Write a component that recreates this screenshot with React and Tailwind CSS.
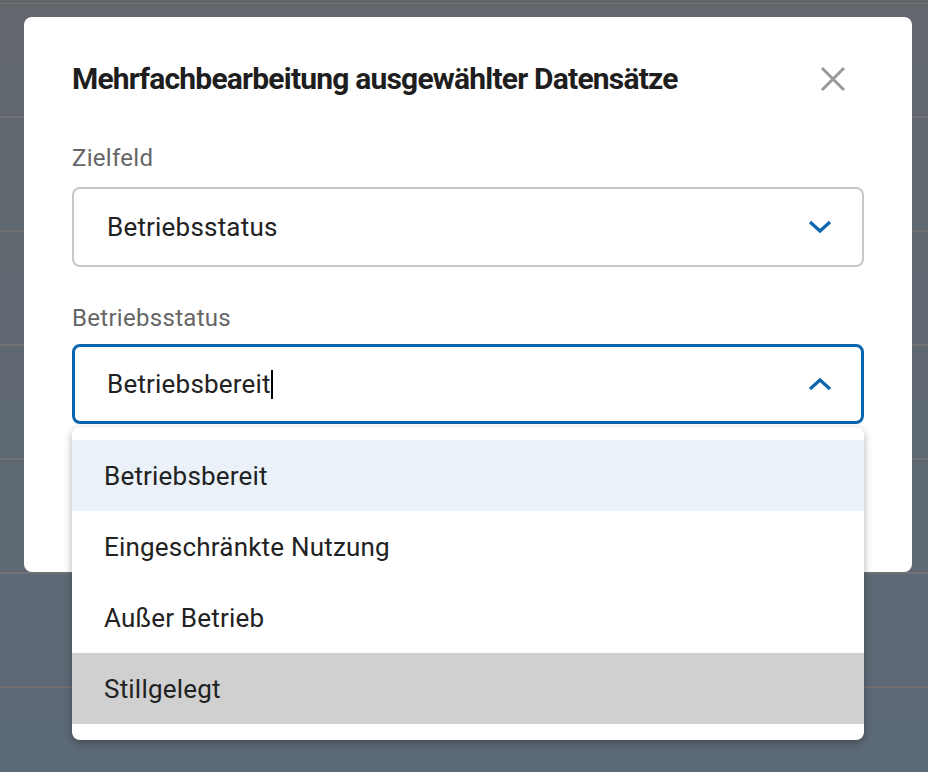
import React from "react";

const options = [
  { label: "Betriebsbereit", className: "bg-[#eaf1f8]" },
  { label: "Eingeschränkte Nutzung", className: "bg-white" },
  { label: "Außer Betrieb", className: "bg-white" },
  { label: "Stillgelegt", className: "bg-[#d0d0d0]" },
];

function Chevron({ up }) {
  return (
    <svg width="24" height="14" viewBox="0 0 24 14" className="shrink-0">
      <polyline
        points={up ? "2,12 12,3 22,12" : "2,2 12,11 22,2"}
        fill="none"
        stroke="#0f65ae"
        strokeWidth="3.2"
      />
    </svg>
  );
}

export default function App() {
  return (
    <div
      className="relative h-[772px] w-[928px] overflow-hidden bg-gradient-to-b from-[#62676d] to-[#5c6a77]"
      style={{ fontFamily: "Roboto, 'Liberation Sans', sans-serif" }}
    >
      {/* page behind the overlay */}
      <div className="flex flex-col">
        <div className="h-[4px] border-b border-[#75716d]" />
        {[0, 1, 2, 3, 4, 5].map((i) => (
          <div key={i} className="h-[114px] border-b-2 border-[#727274]" />
        ))}
      </div>

      {/* dialog */}
      <div className="absolute left-[24px] top-[17px] h-[555px] w-[888px] rounded-lg bg-white px-12 pt-[44px]">
        <div className="flex items-center justify-between">
          <h2 className="whitespace-nowrap text-[30px] font-bold leading-9 tracking-[-0.8px] text-[#1e1e1e]">
            Mehrfachbearbeitung ausgewählter Datensätze
          </h2>
          <button className="mr-[18px] flex h-[26px] w-[26px] items-center justify-center">
            <svg width="26" height="26" viewBox="0 0 26 26">
              <path d="M2 2 L24 24 M24 2 L2 24" stroke="#999999" strokeWidth="3" />
            </svg>
          </button>
        </div>

        <div className="mt-[45px] text-[24px] leading-8 tracking-[0.3px] text-[#666666]">Zielfeld</div>
        <div className="mt-[13px] flex h-[80px] items-center justify-between rounded-lg border-2 border-[#c8c8c8] pl-[33px] pr-[30px]">
          <span className="text-[26px] tracking-[0.2px] text-[#222222]">Betriebsstatus</span>
          <Chevron />
        </div>

        <div className="mt-[35px] text-[24px] leading-8 tracking-[0.3px] text-[#666666]">Betriebsstatus</div>
        <div className="relative mt-[10px]">
          <div className="flex h-[80px] items-center justify-between rounded-lg border-[3px] border-[#0b64b0] pl-[32px] pr-[29px]">
            <span className="flex items-center text-[26px] tracking-[0.2px] text-[#222222]">
              Betriebsbereit
              <span className="inline-block h-[29px] w-[2px] bg-black" />
            </span>
            <Chevron up />
          </div>

          <ul className="absolute left-0 right-0 top-full mt-[3px] rounded-lg bg-white pb-4 pt-[13px] shadow-[0_3px_8px_rgba(0,0,0,0.3)]">
            {options.map((o) => (
              <li
                key={o.label}
                className={`flex h-[71px] items-center pl-8 pt-[2px] text-[26px] tracking-[0.2px] text-[#222222] ${o.className}`}
              >
                {o.label}
              </li>
            ))}
          </ul>
        </div>
      </div>
    </div>
  );
}
